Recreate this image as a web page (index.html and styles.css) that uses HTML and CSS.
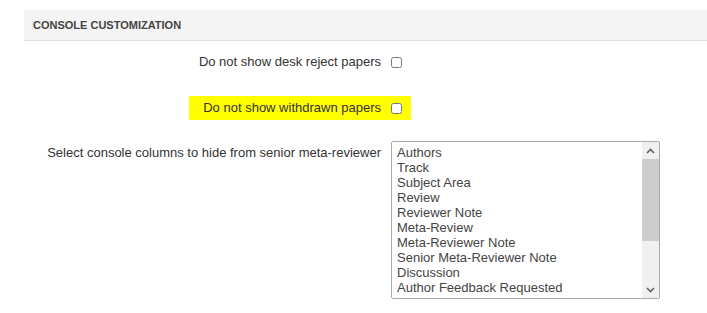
FILE: index.html
```html
<!DOCTYPE html>
<html lang="en">
<head>
<meta charset="UTF-8">
<title>Console Customization</title>
<link rel="stylesheet" href="styles.css">
</head>
<body>
<div class="panel">
    <div class="panel-heading">Console Customization</div>

    <div class="row row-first">
        <label class="row-label" for="hideDesk">Do not show desk reject papers</label>
        <div class="row-control"><input type="checkbox" id="hideDesk"></div>
    </div>

    <div class="row row-marked">
        <div class="row-label"><label class="mark" for="hideWithdrawn">Do not show withdrawn papers</label></div>
        <div class="row-control mark-box"><input type="checkbox" id="hideWithdrawn"></div>
    </div>

    <div class="row row-select">
        <div class="row-label">Select console columns to hide from senior meta-reviewer</div>
        <div class="row-control">
            <div class="listbox" role="listbox" aria-multiselectable="true">
                <div class="listbox-items">
                    <div class="option">Authors</div>
                    <div class="option">Track</div>
                    <div class="option">Subject Area</div>
                    <div class="option">Review</div>
                    <div class="option">Reviewer Note</div>
                    <div class="option">Meta-Review</div>
                    <div class="option">Meta-Reviewer Note</div>
                    <div class="option">Senior Meta-Reviewer Note</div>
                    <div class="option">Discussion</div>
                    <div class="option">Author Feedback Requested</div>
                    <div class="option">Author Feedback Submitted</div>
                </div>
                <div class="scrollbar">
                    <div class="scroll-btn">
                        <svg width="9" height="6" viewBox="0 0 9 6"><path d="M1 5 L4.5 1.5 L8 5" fill="none" stroke="#606060" stroke-width="1.6"/></svg>
                    </div>
                    <div class="scroll-thumb"></div>
                    <div class="scroll-track"></div>
                    <div class="scroll-btn">
                        <svg width="9" height="6" viewBox="0 0 9 6"><path d="M1 1 L4.5 4.5 L8 1" fill="none" stroke="#606060" stroke-width="1.6"/></svg>
                    </div>
                </div>
            </div>
        </div>
    </div>
</div>
</body>
</html>
```

FILE: styles.css
```css
body {
    margin: 0;
    font-family: Arial, "Liberation Sans", sans-serif;
    font-size: 13px;
    color: #333;
    background-color: #fff;
}
.panel {
    margin: 10px 0 0 24px;
}
.panel-heading {
    background-color: #f4f4f4;
    border-bottom: 1px solid #ddd;
    padding: 9px;
    height: 12px;
    font-size: 11px;
    font-weight: bold;
    text-transform: uppercase;
    color: #444;
    line-height: 12px;
}
.row {
    display: flex;
    align-items: center;
    height: 24px;
}
.row-first {
    margin-top: 9px;
}
.row-marked {
    margin-top: 22px;
}
.row-label {
    width: 357px;
    text-align: right;
    line-height: 24px;
}
.row-control {
    padding-left: 10px;
    display: flex;
    align-items: center;
    height: 24px;
}
.mark {
    display: inline-block;
    background-color: #ffff00;
    padding-left: 14px;
}
.mark-box {
    background-color: #ffff00;
    padding-right: 9px;
}
input[type="checkbox"] {
    margin: 0;
    width: 11px;
    height: 11px;
}
.row-select {
    margin-top: 21px;
    align-items: flex-start;
    height: auto;
}
.row-select .row-label {
    line-height: 15px;
    padding-top: 4px;
}
.row-select .row-control {
    height: auto;
}
.listbox {
    display: flex;
    width: 267px;
    height: 156px;
    border: 1px solid #aaa;
    border-radius: 2px;
    background-color: #fff;
}
.listbox-items {
    flex: 1;
    overflow: hidden;
    padding: 3px 0 0 5px;
    color: #444;
    line-height: 15px;
    white-space: nowrap;
}
.scrollbar {
    width: 17px;
    display: flex;
    flex-direction: column;
    background-color: #f0f0f0;
}
.scroll-btn {
    height: 17px;
    display: flex;
    align-items: center;
    justify-content: center;
}
.scroll-btn svg {
    display: block;
}
.scroll-thumb {
    height: 82px;
    background-color: #cdcdcd;
}
.scroll-track {
    flex: 1;
}
```
